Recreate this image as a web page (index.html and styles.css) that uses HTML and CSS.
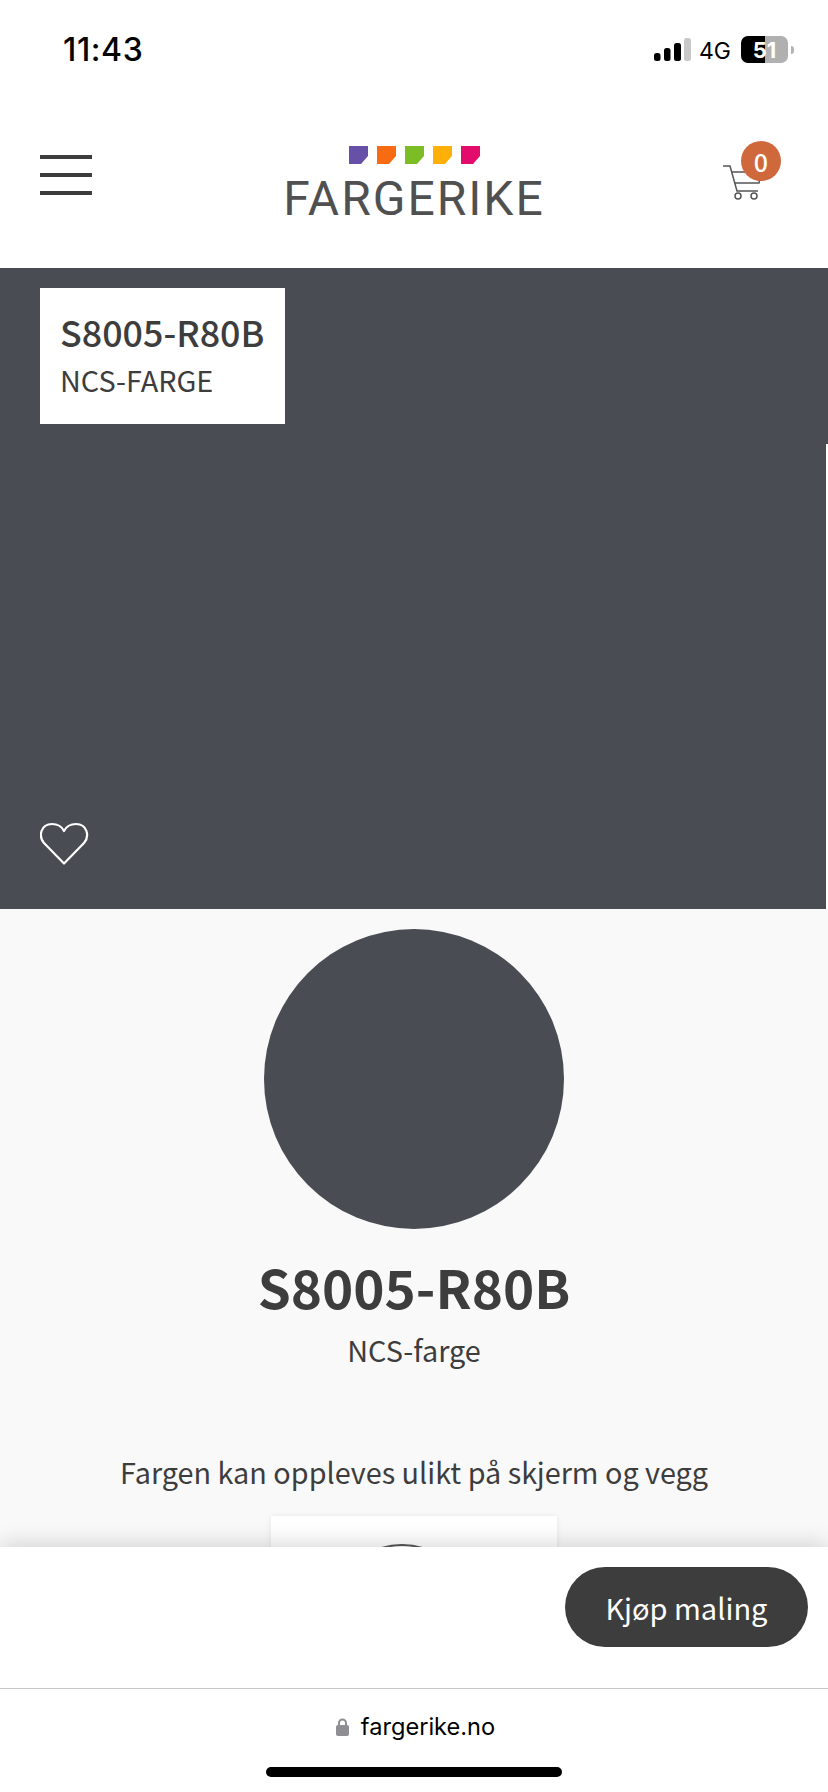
FILE: index.html
```html
<!DOCTYPE html>
<html lang="no">
<head>
<meta charset="utf-8">
<title>S8005-R80B</title>
<link rel="stylesheet" href="styles.css">
</head>
<body>
<div class="screen">
  <main class="page">
    <div class="status">
      <span class="time">11:43</span>
      <div class="status-right">
        <svg class="signal" width="37" height="23" viewBox="0 0 37 23">
          <rect x="0" y="15" width="6.5" height="8" rx="2.5" fill="#000"/>
          <rect x="10" y="10" width="6.5" height="13" rx="2.5" fill="#000"/>
          <rect x="20" y="5" width="7" height="18" rx="2.5" fill="#000"/>
          <rect x="30" y="0" width="7" height="23" rx="2.5" fill="#c8c8c8"/>
        </svg>
        <span class="net">4G</span>
        <div class="battery"><span class="battery-num">51</span></div>
        <span class="nub"></span>
      </div>
    </div>
    <header class="head">
      <div class="burger"><span></span><span></span><span></span></div>
      <div class="logo">
        <div class="chips">
          <svg class="chip" viewBox="0 0 19 18"><path d="M0 0H19V10L12 18H0Z" fill="#6650a8"/></svg>
          <svg class="chip" viewBox="0 0 19 18"><path d="M0 0H19V10L12 18H0Z" fill="#f76b12"/></svg>
          <svg class="chip" viewBox="0 0 19 18"><path d="M0 0H19V10L12 18H0Z" fill="#7cbc24"/></svg>
          <svg class="chip" viewBox="0 0 19 18"><path d="M0 0H19V10L12 18H0Z" fill="#fdb008"/></svg>
          <svg class="chip" viewBox="0 0 19 18"><path d="M0 0H19V10L12 18H0Z" fill="#e30b6c"/></svg>
        </div>
        <span class="wordmark">FARGERIKE</span>
      </div>
      <div class="cart">
        <svg width="38" height="35" viewBox="0 0 38 35" fill="none" stroke="#555" stroke-width="1.5">
          <path d="M0 1H7L14 26H35"/>
          <path d="M9 7H32M11.500 18H36L37 13"/>
          <circle cx="15" cy="31" r="3"/>
          <circle cx="31" cy="31" r="3"/>
        </svg>
        <span class="badge">0</span>
      </div>
    </header>
    <section class="hero">
      <div class="tag">
        <div class="tag-code">S8005-R80B</div>
        <div class="tag-type">NCS-FARGE</div>
      </div>
      <svg class="heart" width="50" height="43" viewBox="1 0 50 43" fill="none" stroke="#fff" stroke-width="2.200">
        <path d="M25 41.500 5 21C-1 14 2 2 13 2c6 0 10 3 12 7 2-4 6-7 12-7 11 0 14 12 8 19Z" stroke-linejoin="round"/>
      </svg>
      <span class="edge"></span>
    </section>
    <section class="info">
      <div class="swatch"></div>
      <h1 class="code">S8005-R80B</h1>
      <p class="type">NCS-farge</p>
      <p class="note">Fargen kan oppleves ulikt på skjerm og vegg</p>
      <div class="card"><span class="arc"></span></div>
    </section>
  </main>
  <div class="buybar"><button class="buy">Kjøp maling</button></div>
  <footer class="urlbar">
    <div class="url">
      <svg width="13" height="18" viewBox="0 0 13 18"><path d="M3 8V5a3.500 3.500 0 0 1 7 0v3" fill="none" stroke="#8e8e93" stroke-width="2"/><rect y="7" width="13" height="11" rx="2" fill="#8e8e93"/></svg>
      <span class="domain">fargerike.no</span>
    </div>
    <span class="home"></span>
  </footer>
</div>
</body>
</html>
```

FILE: styles.css
```css
* { box-sizing: border-box; }
html, body { margin: 0; padding: 0; background: #fff; }
.screen {
  width: 828px;
  height: 1792px;
  overflow: hidden;
  display: flex;
  flex-direction: column;
  font-family: "Noto Sans CJK SC", "Noto Sans", sans-serif;
  color: #3d3d3d;
}
.page { height: 1547px; overflow: hidden; flex: none; }

.status {
  height: 96px;
  padding: 33px 34px 0 63px;
  display: flex;
  justify-content: space-between;
  align-items: flex-start;
  font-family: "Inter", "Liberation Sans", sans-serif;
  color: #000;
}
.time { font-size: 32px; line-height: 34px; font-weight: 500; letter-spacing: 0.6px; }
.status-right { display: flex; align-items: flex-start; padding-top: 5px; }
.signal { display: block; }
.net { font-size: 23px; line-height: 24px; font-weight: 400; margin: 0 10px 0 8px; padding-top: 1px; }
.battery {
  width: 47px;
  height: 27px;
  margin-top: -2px;
  border-radius: 7px;
  background: linear-gradient(90deg, #000 0 24px, #b0b0b0 24px);
  display: flex;
  align-items: center;
  justify-content: center;
}
.battery-num { color: #fff; font-size: 22px; font-weight: 700; line-height: 1; }
.nub { width: 3px; height: 8px; margin: 8px 0 0 3px; background: #b4b4b4; border-radius: 0 3px 3px 0; }

.head {
  height: 172px;
  padding: 0 47px 0 40px;
  display: flex;
  align-items: flex-start;
  justify-content: space-between;
  position: relative;
}
.burger { display: flex; flex-direction: column; gap: 14px; width: 52px; margin-top: 59px; }
.burger span { height: 4px; background: #3d3d3d; }
.logo { display: flex; flex-direction: column; align-items: center; width: 258px; margin-top: 50px; margin-left: 14px; }
.chips { display: flex; gap: 9px; }
.chip { width: 19px; height: 18px; display: block; }
.wordmark {
  font-family: "Roboto", sans-serif;
  font-weight: 400;
  font-size: 48px;
  line-height: 34px;
  margin-top: 18px;
  color: #505050;
  letter-spacing: 2px;
  white-space: nowrap;
}
.cart { position: relative; width: 59px; height: 57px; margin-top: 45px; }
.cart svg { position: absolute; left: 1px; top: 24px; }
.badge {
  position: absolute;
  left: 19px;
  top: 0;
  width: 40px;
  height: 40px;
  border-radius: 50%;
  background: #cf693b;
  color: #fff;
  font-size: 25px;
  font-weight: 500;
  line-height: 40px;
  text-align: center;
}

.hero {
  height: 641px;
  background: #4a4c54;
  padding: 20px 0 0 40px;
  position: relative;
  display: flex;
  flex-direction: column;
  justify-content: space-between;
}
.tag {
  width: 245px;
  height: 136px;
  background: #fff;
  padding: 20px 0 0 20px;
}
.tag-code { font-size: 35.800px; line-height: 46px; font-weight: 500; white-space: nowrap; }
.tag-type { font-size: 28.8px; line-height: 38px; margin-top: 7px; white-space: nowrap; }
.heart { display: block; margin-bottom: 44px; }
.edge { position: absolute; right: 0; top: 176px; bottom: 0; width: 2px; background: #fff; }

.info {
  background: #f9f9f9;
  height: 638px;
  padding-top: 20px;
  display: flex;
  flex-direction: column;
  align-items: center;
}
.swatch { width: 300px; height: 300px; border-radius: 50%; background: #4a4c54; flex: none; }
.code { margin: 21px 0 0; font-size: 53px; line-height: 72px; font-weight: 700; }
.type { margin: 8px 0 0; font-size: 28.8px; line-height: 40px; }
.note { margin: 81px 0 0; font-size: 28.8px; line-height: 42px; white-space: nowrap; }
.card {
  width: 286px;
  height: 80px;
  margin-top: 23px;
  background: #fff;
  box-shadow: 0 0 6px rgba(0,0,0,.08);
  display: flex;
  justify-content: center;
  padding: 28px 24px 0 0;
  flex: none;
}
.arc { width: 136px; height: 136px; border: 2px solid #555; border-radius: 50%; flex: none; }

.buybar {
  height: 141px;
  flex: none;
  background: #fff;
  position: relative;
  box-shadow: 0 -3px 22px rgba(0,0,0,.16);
  display: flex;
  justify-content: flex-end;
  align-items: flex-start;
  padding: 20px 20px 0 0;
}
.buy {
  width: 243px;
  height: 80px;
  border: 0;
  border-radius: 40px;
  background: #3d3d3d;
  color: #fff;
  font-family: inherit;
  font-size: 29px;
  font-weight: 400;
  padding: 0;
}
.urlbar {
  flex: 1;
  background: #fff;
  border-top: 1px solid #c8c8c8;
  position: relative;
  display: flex;
  flex-direction: column;
  align-items: center;
  font-family: "Inter", "Liberation Sans", sans-serif;
}
.url { display: flex; align-items: center; gap: 12px; margin-top: 24px; margin-left: 3px; height: 28px; }
.url svg { display: block; }
.domain { font-size: 23.6px; line-height: 28px; color: #000; }
.home { width: 296px; height: 10px; border-radius: 5px; background: #000; margin-top: 26px; }
```
